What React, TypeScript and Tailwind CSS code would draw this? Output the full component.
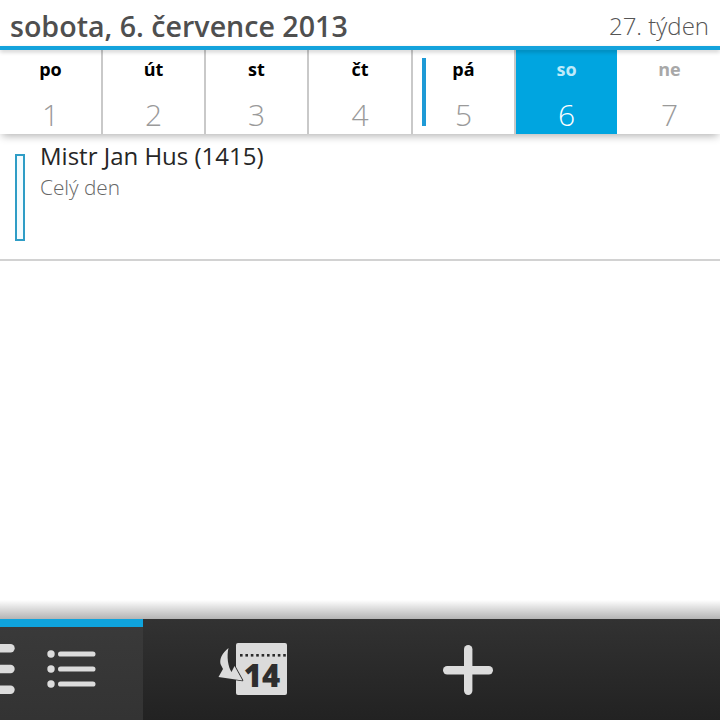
import React from "react";

const days = [
  { d: "po", n: "1", w: "w-[103px]" },
  { d: "út", n: "2", w: "w-[103px]" },
  { d: "st", n: "3", w: "w-[103px]" },
  { d: "čt", n: "4", w: "w-[104px]" },
];

function DayCell({ d, n, w, today }: { d: string; n: string; w: string; today?: boolean }) {
  return (
    <div className={`${w} relative flex h-full flex-col items-center border-r-2 border-[#c9c9c9]`}>
      {today && <div className="absolute left-[9px] top-[8px] h-[68px] w-[4px] bg-[#1e9ad6]" />}
      <span className="mt-[5px] text-[18px] font-bold leading-[28px] text-black">{d}</span>
      <span className="mt-[13px] text-[30px] font-light leading-[38px] text-[#9a9a9a]">{n}</span>
    </div>
  );
}

function SubMenuDots() {
  return (
    <svg width="15" height="50" viewBox="0 0 15 50" className="shrink-0">
      <g fill="#dcdcdc">
        <path d="M0 0h10.5a4.2 4.2 0 0 1 0 8.4H0z" />
        <path d="M0 20.8h10.5a4.2 4.2 0 0 1 0 8.4H0z" />
        <path d="M0 41.6h10.5a4.2 4.2 0 0 1 0 8.4H0z" />
      </g>
    </svg>
  );
}

function ListIcon() {
  return (
    <svg width="50" height="38" viewBox="0 0 50 38">
      <g fill="#dcdcdc">
        <circle cx="4" cy="4" r="3.7" />
        <circle cx="4" cy="19" r="3.7" />
        <circle cx="4" cy="34" r="3.7" />
        <rect x="11" y="1.4" width="37.5" height="5.2" rx="2.6" />
        <rect x="11" y="16.4" width="37.5" height="5.2" rx="2.6" />
        <rect x="11" y="31.4" width="37.5" height="5.2" rx="2.6" />
      </g>
    </svg>
  );
}

function CalendarIcon() {
  return (
    <svg width="70" height="54" viewBox="0 0 70 54">
      <rect x="18" y="0" width="51" height="52" rx="2" fill="#dbdbdb" />
      <g fill="#2b2b2b">
        {[0, 1, 2, 3, 4, 5, 6, 7, 8].map((i) => (
          <rect key={i} x={22 + i * 5.4} y="11" width="2.6" height="2.6" />
        ))}
      </g>
      <text
        x="44"
        y="44"
        textAnchor="middle"
        fontFamily="'Open Sans', sans-serif"
        fontWeight="800"
        fontSize="31"
        fill="#2e2e2e"
      >
        14
      </text>
      <path
        d="M10.5 5 C4 10 1.5 16 2.5 21 L5 26 L0.5 34 L24.5 37.5 L16.5 23 L13.5 29 C10 24 8.5 13 10.5 5Z"
        fill="#dbdbdb"
        stroke="#2b2b2b"
        strokeWidth="1.6"
        strokeLinejoin="round"
        paintOrder="stroke"
      />
    </svg>
  );
}

function PlusIcon() {
  return (
    <svg width="50" height="50" viewBox="0 0 50 50">
      <rect x="21" y="0" width="8.4" height="50" rx="4.2" fill="#dcdcdc" />
      <rect x="0" y="21" width="50" height="8.4" rx="4.2" fill="#dcdcdc" />
    </svg>
  );
}

export default function App() {
  return (
    <div
      className="relative flex h-[720px] w-[720px] flex-col overflow-hidden bg-white"
      style={{ fontFamily: "'Open Sans', 'Noto Sans', sans-serif" }}
    >
      <header className="flex h-[46px] shrink-0 items-end justify-between pb-[1px] pl-[10px] pr-[11px]">
        <h1 className="text-[28.6px] font-semibold leading-[38px] text-[#4f4f4f]">sobota, 6. července 2013</h1>
        <span className="text-[24px] font-light leading-[38px] text-[#555555]">27. týden</span>
      </header>
      <div className="relative z-10 h-[4px] shrink-0 bg-[#14a3dc] shadow-[0_2px_4px_rgba(0,0,0,0.2)]" />

      <div className="relative flex h-[84px] shrink-0 shadow-[0_4px_8px_-2px_rgba(0,0,0,0.3)]">
        {days.map((x) => (
          <DayCell key={x.d} {...x} />
        ))}
        <DayCell d="pá" n="5" w="w-[103px]" today />
        <div className="flex h-full w-[101px] flex-col items-center bg-[#00a5e0]">
          <span className="mt-[5px] text-[18px] font-bold leading-[28px] text-[#bfeaf9]">so</span>
          <span className="mt-[13px] text-[30px] font-light leading-[38px] text-white">6</span>
        </div>
        <div className="flex h-full flex-1 flex-col items-center pl-[2px]">
          <span className="mt-[5px] text-[18px] font-bold leading-[28px] text-[#a8a8a8]">ne</span>
          <span className="mt-[13px] text-[30px] font-light leading-[38px] text-[#9a9a9a]">7</span>
        </div>
      </div>

      <div className="flex h-[127px] shrink-0 border-b-2 border-[#d2d2d2] pl-[15px]">
        <div className="mt-[20px] h-[87px] w-[10px] border-2 border-[#2f9dc6] bg-[#f4fcff]" />
        <div className="ml-[15px] flex flex-col">
          <span className="mt-[6px] text-[24px] leading-[32px] text-[#262626]">Mistr Jan Hus (1415)</span>
          <span className="mt-[1px] text-[20.8px] font-light leading-[28px] text-[#666666]">Celý den</span>
        </div>
      </div>

      <div className="flex-1" />
      <div className="h-[19px] shrink-0 bg-gradient-to-b from-white to-[#b4b4b4]" />

      <nav className="flex h-[101px] shrink-0 bg-gradient-to-b from-[#323232] to-[#222222]">
        <div className="flex w-[143px] shrink-0 flex-col bg-gradient-to-b from-[#3a3a3a] to-[#333333]">
          <div className="h-[8px] bg-[#0fa3dc]" />
          <div className="flex items-center pt-[17px]">
            <SubMenuDots />
            <div className="ml-[32px]">
              <ListIcon />
            </div>
          </div>
        </div>
        <div className="ml-[75px] mt-[24px]">
          <CalendarIcon />
        </div>
        <div className="ml-[155px] mt-[26px]">
          <PlusIcon />
        </div>
      </nav>
    </div>
  );
}
